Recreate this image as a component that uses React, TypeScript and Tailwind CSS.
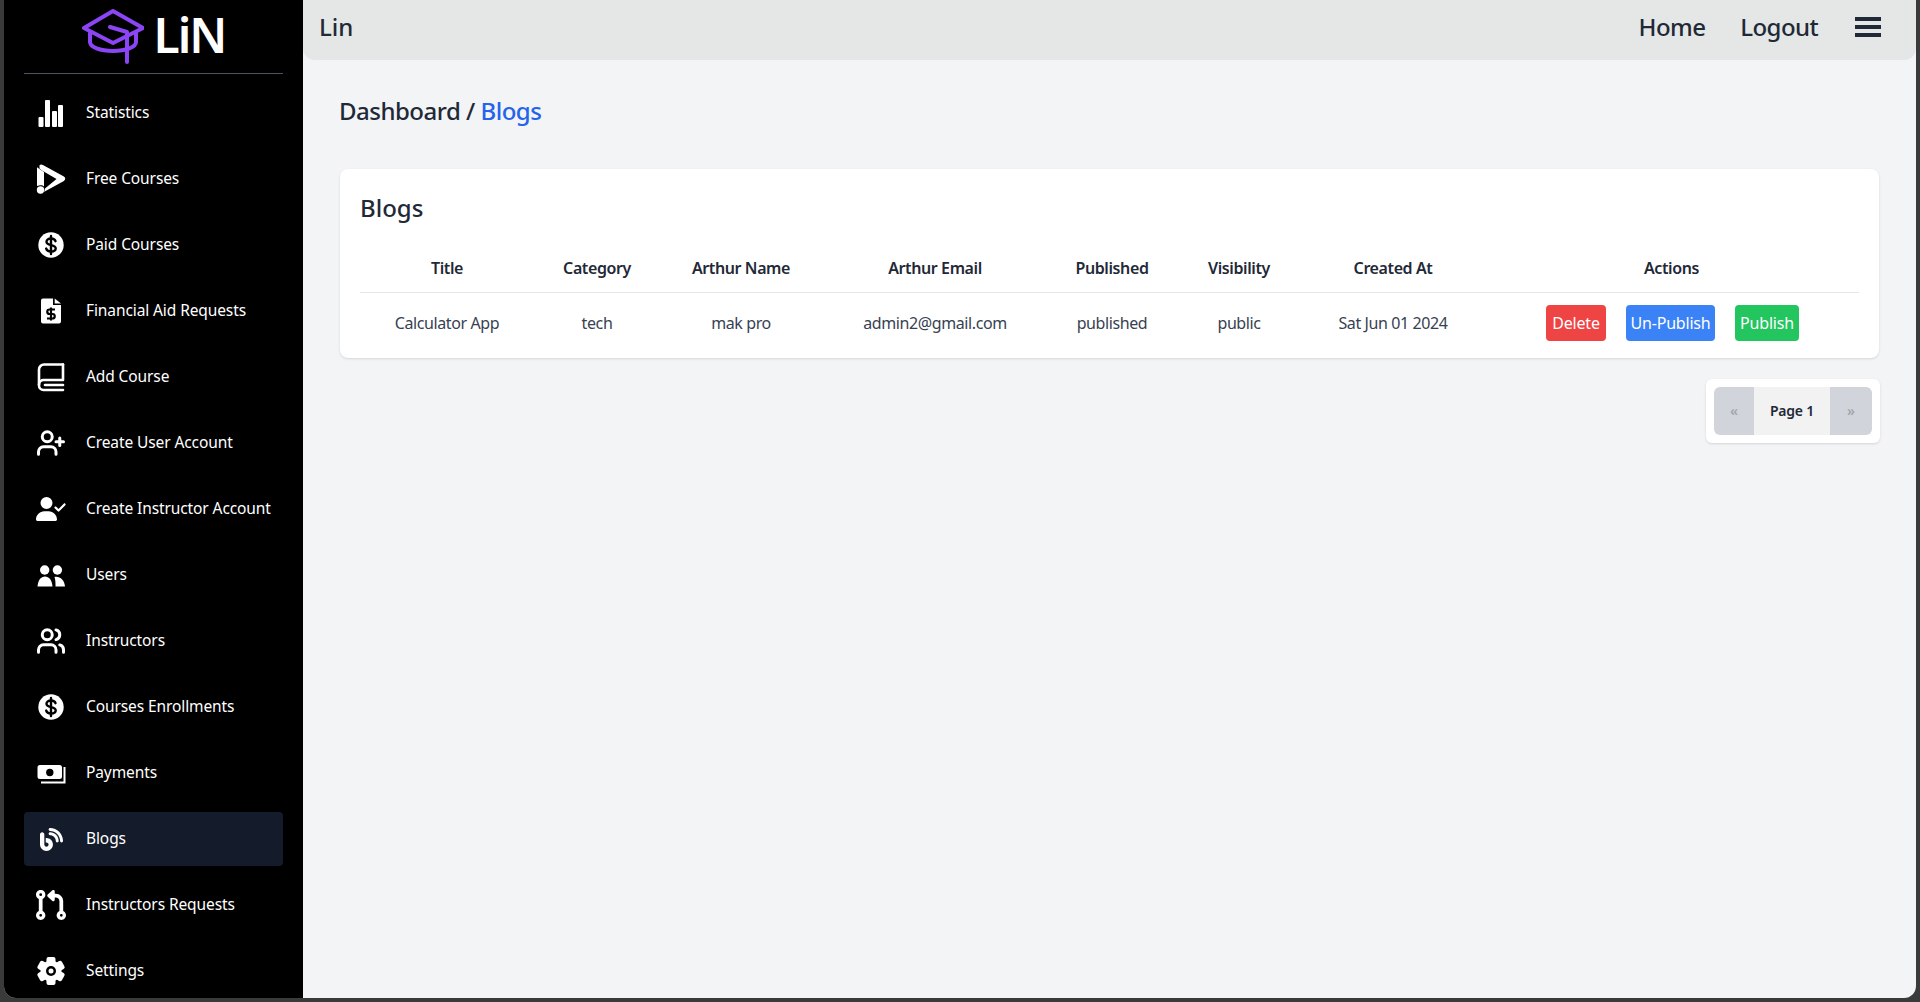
import React from "react";
import { FaUserCheck, FaBlog, FaCodePullRequest } from "react-icons/fa6";
import { LuUsers, LuUserPlus } from "react-icons/lu";

type IconProps = { className?: string };

const Stats = ({ className }: IconProps) => (
  <svg viewBox="0 0 30 30" className={className} fill="currentColor">
    <rect x="2.500" y="19" width="5" height="10" rx="1" />
    <rect x="9" y="2" width="5" height="27" rx="1" />
    <rect x="16" y="13" width="5" height="16" rx="1" />
    <rect x="22" y="7" width="5" height="22" rx="1" />
  </svg>
);

const Play = ({ className }: IconProps) => (
  <svg viewBox="0 0 30 30" className={className} fill="currentColor">
    <path d="M3.500 1.200c1-.9 2.200-.9 3.400-.2l21 11.600c1.800 1 1.800 3.300 0 4.300L7.800 28c.8-.9 1.100-2 .9-3.200L20.500 15 6 6.500 3.500 4.500z" />
    <path d="M1 3.300 8 8v14.500c-1.200-1.200-3.600-1.600-7-.5z" />
    <circle cx="4.500" cy="26" r="3.700" />
  </svg>
);

const DollarCircle = ({ className }: IconProps) => (
  <svg viewBox="0 0 30 30" className={className}>
    <circle cx="15" cy="15" r="12.700" fill="currentColor" />
    <path d="M19.500 11.200c-.5-1.700-2.300-2.700-4.500-2.700-2.600 0-4.500 1.300-4.500 3.300 0 4.600 9.200 2 9.200 6.500 0 2-2 3.200-4.700 3.200-2.400 0-4.200-1-4.800-2.900" fill="none" stroke="#000" strokeWidth="2.400" strokeLinecap="round" />
    <path d="M15 6v18" stroke="#000" strokeWidth="2.400" strokeLinecap="round" />
  </svg>
);

const FileDollar = ({ className }: IconProps) => (
  <svg viewBox="0 0 30 30" className={className}>
    <path d="M7 2.500h10v6.500h8v16.500a2 2 0 0 1-2 2H7a2 2 0 0 1-2-2v-21a2 2 0 0 1 2-2z" fill="currentColor" />
    <path d="M18.700 2.500 25 7.500h-6.300z" fill="currentColor" />
    <path d="M19 13.500h-5.500a2 2 0 0 0 0 4.500h3a2 2 0 0 1 0 4.500H11" fill="none" stroke="#000" strokeWidth="2.200" />
    <path d="M15 11.500v13" stroke="#000" strokeWidth="2.200" />
  </svg>
);

const Book = ({ className }: IconProps) => (
  <svg viewBox="0 0 30 30" className={className} fill="none" stroke="currentColor" strokeWidth="2.600" strokeLinecap="round" strokeLinejoin="round">
    <path d="M27 2.500H8A5 5 0 0 0 3 7.500v16a4.500 4.500 0 0 0 4.500 4.500H27" />
    <path d="M27 2.500V18H8a4.500 4.500 0 0 0-5 4.500" />
    <path d="M27 23H9" />
  </svg>
);

const UserPlusBold = ({ className }: IconProps) => <LuUserPlus className={className} strokeWidth={2.400} />;
const UsersBold = ({ className }: IconProps) => <LuUsers className={className} strokeWidth={2.400} />;

const People = ({ className }: IconProps) => (
  <svg viewBox="0 0 30 30" className={className} fill="currentColor">
    <circle cx="8.700" cy="10" r="4.700" />
    <circle cx="21.400" cy="10" r="4.700" />
    <path d="M1.500 26.500C2 20 5 16.500 9 16.500s7 3.500 7.500 10z" />
    <path d="M18.500 17c5.500-1 10 3 10.500 9.500h-9.500c0-3.500 0-6.500-1-9.500z" />
  </svg>
);

const Cash = ({ className }: IconProps) => (
  <svg viewBox="0 0 30 30" className={className}>
    <path fillRule="evenodd" fill="currentColor" d="M4 7h19.500a2.500 2.500 0 0 1 2.500 2.500v9a2.500 2.500 0 0 1-2.500 2.500H4a2.500 2.500 0 0 1-2.500-2.500v-9A2.500 2.500 0 0 1 4 7zm9.800 3.800a3.700 3.700 0 1 0 0 7.400 3.700 3.700 0 0 0 0-7.400z" />
    <path d="M28.500 9v15.500H5" fill="none" stroke="currentColor" strokeWidth="2" />
  </svg>
);

const Gear = ({ className }: IconProps) => (
  <svg viewBox="0 0 30 30" className={className}>
    <g fill="currentColor">
      <circle cx="15" cy="15" r="10.500" />
      <rect x="10.500" y="1" width="9" height="28" rx="2" />
      <rect x="10.500" y="1" width="9" height="28" rx="2" transform="rotate(60 15 15)" />
      <rect x="10.500" y="1" width="9" height="28" rx="2" transform="rotate(120 15 15)" />
    </g>
    <circle cx="15" cy="15" r="5" fill="#000" />
    <circle cx="15" cy="15" r="2.500" fill="currentColor" />
  </svg>
);

const SmallBlog = ({ className }: IconProps) => (
  <span className={`${className} flex items-center justify-center`}>
    <FaBlog className="h-[23px] w-[23px]" />
  </span>
);

const items: [string, React.ComponentType<IconProps>, boolean?][] = [
  ["Statistics", Stats],
  ["Free Courses", Play],
  ["Paid Courses", DollarCircle],
  ["Financial Aid Requests", FileDollar],
  ["Add Course", Book],
  ["Create User Account", UserPlusBold],
  ["Create Instructor Account", FaUserCheck],
  ["Users", People],
  ["Instructors", UsersBold],
  ["Courses Enrollments", DollarCircle],
  ["Payments", Cash],
  ["Blogs", SmallBlog, true],
  ["Instructors Requests", FaCodePullRequest],
  ["Settings", Gear],
];

const heads: [string, string][] = [
  ["Title", "w-[174px]"],
  ["Category", "w-[126px]"],
  ["Arthur Name", "w-[162px]"],
  ["Arthur Email", "w-[226px]"],
  ["Published", "w-[128px]"],
  ["Visibility", "w-[126px]"],
  ["Created At", "w-[182px]"],
  ["Actions", "w-[375px]"],
];

const cells = ["Calculator App", "tech", "mak pro", "admin2@gmail.com", "published", "public", "Sat Jun 01 2024"];

export default function App() {
  return (
    <div className="h-[1002px] overflow-hidden bg-[#3a3a3a] pr-1 pb-1 pl-1 font-['Noto_Sans',sans-serif] text-[#1f2937]">
      <div className="flex h-[998px] overflow-hidden rounded-b-xl bg-[#f3f4f6]">
        <aside className="w-[299px] shrink-0 bg-black px-5 text-white">
          <div className="flex h-[74px] items-center justify-center gap-[10px] border-b border-[#4b5563]">
            <svg viewBox="80 9 62 55" className="h-[55px] w-[62px] text-[#8b45f5]" fill="none" stroke="currentColor" strokeWidth="4" strokeLinecap="round" strokeLinejoin="round">
              <path d="M111 11 141 28 111 43 82 28z" />
              <path d="M88 33v9c0 5 10 9 23 9s23-4 23-9v-9" />
              <path d="M108 27l17 5v30" />
            </svg>
            <span className="pb-1 text-[48px] leading-none font-semibold tracking-[-2px]">LiN</span>
          </div>
          <nav className="mt-3 flex flex-col gap-3">
            {items.map(([label, Icon, active]) => (
              <a key={label} className={`flex h-[54px] items-center rounded pl-3 ${active ? "bg-[#141b2a]" : ""}`}>
                <Icon className="h-[30px] w-[30px] shrink-0" />
                <span className="ml-5 text-[15.500px] tracking-[-0.100px] whitespace-nowrap">{label}</span>
              </a>
            ))}
          </nav>
        </aside>
        <main className="min-w-0 flex-1">
          <header className="flex h-[60px] items-center justify-between rounded-b-xl bg-[#e5e7e6] pr-[34px] pb-[6px] pl-4">
            <span className="text-2xl font-medium">Lin</span>
            <div className="flex items-center text-2xl font-medium tracking-[-0.600px]">
              <a>Home</a>
              <a className="ml-[35px]">Logout</a>
              <svg viewBox="0 0 28 20" className="ml-[36px] h-5 w-7" fill="currentColor">
                <rect x="1" width="26" height="4" />
                <rect x="1" y="8" width="26" height="4" />
                <rect x="1" y="16" width="26" height="4" />
              </svg>
            </div>
          </header>
          <div className="pr-9 pl-[37px]">
            <h1 className="mt-[35px] -ml-px text-2xl leading-8 font-medium tracking-[-0.500px]">
              Dashboard / <span className="text-[#2563eb]">Blogs</span>
            </h1>
            <section className="mt-[42px] h-[189px] w-[1539px] rounded-lg bg-white px-5 pt-[23px] shadow">
              <h2 className="text-2xl leading-8 font-medium">Blogs</h2>
              <table className="mt-[13px] w-[1499px] table-fixed text-center text-base">
                <thead>
                  <tr className="h-[55px] border-b border-[#e5e7eb]">
                    {heads.map(([h, w]) => (
                      <th key={h} className={`${w} pt-2 font-semibold tracking-[-0.400px]`}>{h}</th>
                    ))}
                  </tr>
                </thead>
                <tbody>
                  <tr className="h-[62px]">
                    {cells.map((c) => (
                      <td key={c} className="tracking-[-0.400px] text-[#374151]">{c}</td>
                    ))}
                    <td>
                      <div className="flex justify-center gap-5 pl-[2px] tracking-[-0.200px] text-white">
                        <button className="h-9 w-[60px] rounded bg-[#ef4444]">Delete</button>
                        <button className="h-9 w-[89px] rounded bg-[#3b82f6]">Un-Publish</button>
                        <button className="h-9 w-[64px] rounded bg-[#22c55e]">Publish</button>
                      </div>
                    </td>
                  </tr>
                </tbody>
              </table>
            </section>
            <div className="mt-[21px] flex w-[1540px] justify-end">
              <div className="flex rounded-md bg-white p-2 text-sm font-semibold shadow-sm">
                <span className="flex h-12 w-10 items-center justify-center rounded-l-md bg-[#d1d5db] text-[#a3a6ad]">«</span>
                <span className="flex h-12 w-[76px] items-center justify-center bg-[#f2f2f2] pb-px tracking-[-0.200px]">Page 1</span>
                <span className="flex h-12 w-[42px] items-center justify-center rounded-r-md bg-[#d1d5db] text-[#a3a6ad]">»</span>
              </div>
            </div>
          </div>
        </main>
      </div>
    </div>
  );
}
